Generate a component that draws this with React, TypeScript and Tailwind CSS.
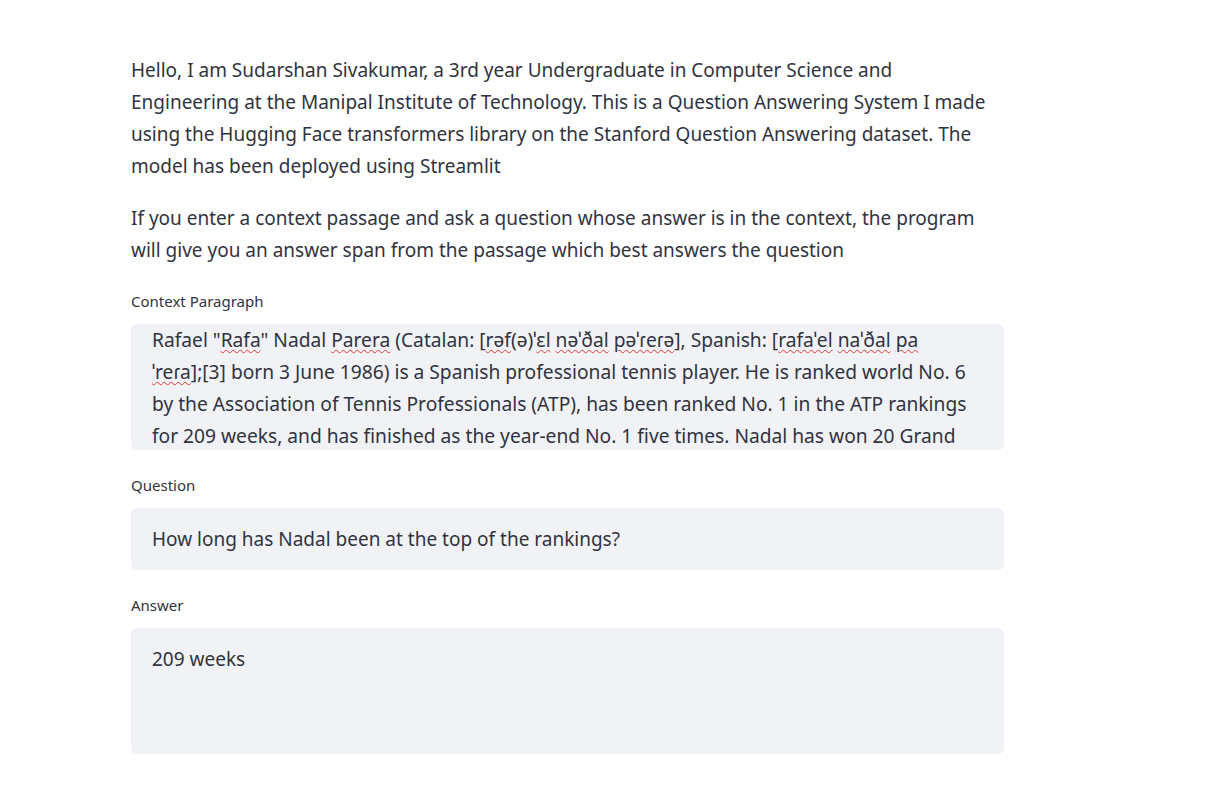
import React from "react";

const font = { fontFamily: '"Noto Sans", "Open Sans", sans-serif' };

function Sp({ children }: { children: React.ReactNode }) {
  return <span className="underline decoration-wavy decoration-[#e53935] decoration-1 underline-offset-[2px]">{children}</span>;
}

const contextLines: React.ReactNode[] = [
  <>
    Rafael "<Sp>Rafa</Sp>" Nadal <Sp>Parera</Sp> (Catalan: [<Sp>rəf</Sp>(ə)ˈ<Sp>ɛl</Sp> <Sp>nəˈðal</Sp>{" "}
    <Sp>pəˈɾeɾə</Sp>], Spanish: [<Sp>rafaˈel</Sp> <Sp>naˈðal</Sp> <Sp>pa</Sp>
  </>,
  <>
    <Sp>ˈreɾa</Sp>];[3] born 3 June 1986) is a Spanish professional tennis player. He is ranked world No. 6
  </>,
  <>by the Association of Tennis Professionals (ATP), has been ranked No. 1 in the ATP rankings</>,
  <>for 209 weeks, and has finished as the year-end No. 1 five times. Nadal has won 20 Grand</>,
];

export default function App() {
  return (
    <div className="min-h-screen bg-white text-[#31333f]" style={font}>
      <div className="w-[873px] ml-[131px] pt-[54px] pb-10">
        <p className="text-[19px] leading-[32px] whitespace-nowrap">
          Hello, I am Sudarshan Sivakumar, a 3rd year Undergraduate in Computer Science and
          <br />
          Engineering at the Manipal Institute of Technology. This is a Question Answering System I made
          <br />
          using the Hugging Face transformers library on the Stanford Question Answering dataset. The
          <br />
          model has been deployed using Streamlit
        </p>
        <p className="mt-5 text-[19px] leading-[32px] whitespace-nowrap">
          If you enter a context passage and ask a question whose answer is in the context, the program
          <br />
          will give you an answer span from the passage which best answers the question
        </p>

        <div className="mt-6">
          <label className="block text-[15px] leading-[22px] mb-3">Context Paragraph</label>
          <div className="h-[126px] overflow-hidden rounded-md bg-[#f0f2f6] px-[21px] text-[19.2px] leading-[32px]">
            {contextLines.map((l, i) => (
              <div key={i} className="whitespace-nowrap">
                {l}
              </div>
            ))}
          </div>
        </div>

        <div className="mt-6">
          <label className="block text-[15px] leading-[22px] mb-3">Question</label>
          <div className="flex h-[62px] items-center rounded-md bg-[#f0f2f6] px-[21px] text-[19px]">
            How long has Nadal been at the top of the rankings?
          </div>
        </div>

        <div className="mt-6">
          <label className="block text-[15px] leading-[22px] mb-3">Answer</label>
          <div className="h-[126px] rounded-md bg-[#f0f2f6] px-[21px] pt-[15px] text-[19px] leading-[32px]">
            209 weeks
          </div>
        </div>
      </div>
    </div>
  );
}
